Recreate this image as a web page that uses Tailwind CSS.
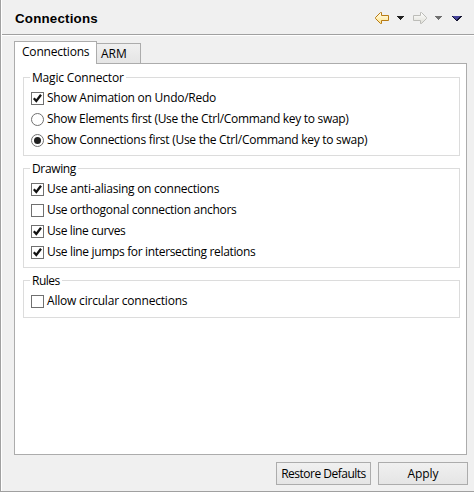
<!DOCTYPE html>
<html lang="en">
<head>
<meta charset="utf-8">
<title>Connections</title>
<script src="https://cdn.jsdelivr.net/npm/@tailwindcss/browser@4"></script>
</head>
<body class="h-[492px] w-[474px] overflow-hidden bg-[#f0f0f0] font-['Open_Sans','Noto_Sans',sans-serif] text-[12px] leading-[16px] text-black">
<main class="flex h-full flex-col border-b border-l border-[#a0a0a0]">
<div class="flex min-h-0 flex-1 flex-col border-l border-white">
  <header class="flex h-[35px] shrink-0 items-center border-b border-[#a0a0a0] pl-[13px]">
    <h1 class="flex-1 pt-[3px] font-['Liberation_Sans',Arial,sans-serif] text-[13.33px] font-bold tracking-[0.2px]">Connections</h1>
    <svg class="h-[34px] w-[104px]" viewBox="370 0 104 34" shape-rendering="crispEdges">
      <defs>
        <linearGradient id="gold" x1="0" y1="0" x2="0" y2="1"><stop offset="0" stop-color="#fffdf0"/><stop offset="1" stop-color="#ffe389"/></linearGradient>
        <linearGradient id="grey" x1="0" y1="0" x2="0" y2="1"><stop offset="0" stop-color="#fff"/><stop offset="1" stop-color="#deded6"/></linearGradient>
      </defs>
      <path d="M375.5 17.5L380.5 12.5H381.5V15.5H388.5V20.5H381.5V23.5H380.5L375.5 18.5Z" fill="url(#gold)" stroke="#b87b13" shape-rendering="auto"/>
      <path d="M397 16h7v1h-1v1h-1v1h-1v1h-1v-1h-1v-1h-1v-1h-1z" fill="#202020"/>
      <path d="M426.500 17.5L421.5 12.5H420.5V15.5H413.500V20.5H420.5V23.5H421.5L426.500 18.5Z" fill="url(#grey)" stroke="#bcbcb8" shape-rendering="auto"/>
      <path d="M435 16h7v1h-1v1h-1v1h-1v1h-1v-1h-1v-1h-1v-1h-1z" fill="#707070"/>
      <path d="M452 16h10v1h-1v1h-1v1h-1v1h-1v1h-2v-1h-1v-1h-1v-1h-1v-1h-1z" fill="#12122e"/>
      <path d="M453 16h7v1h-1v1h-1v1h-1v1h-1v-1h-1v-1h-1v-1h-1z" fill="#45439a"/>
    </svg>
  </header>
  <div class="h-px shrink-0 bg-white"></div>

  <div class="flex shrink-0 items-end pt-[5px] pl-[12px]">
    <div class="relative z-10 -mb-px h-[23px] w-[83px] border border-b-0 border-[#acacac] bg-white pt-[2px] pl-[7px] tracking-[-0.2px] whitespace-nowrap">Connections</div>
    <div class="h-[20px] w-[44px] border border-b-0 border-l-0 border-[#acacac] bg-linear-to-b from-[#f0f0f0] to-[#e5e5e5] pt-[2px] pl-[4px]">ARM</div>
  </div>
  <section class="ml-[12px] flex h-[392px] w-[453px] shrink-0 flex-col border border-[#acacac] bg-white pt-[6px] pl-[8px]">
    <div class="relative h-[86px] w-[437px] shrink-0">
      <div class="mt-[7px] h-[79px] border border-[#dcdcdc] pt-[12px] pl-[7px]">
        <div class="flex h-[16px] items-center gap-[3px]"><svg class="size-[13px]" viewBox="0 0 13 13"><rect x=".5" y=".5" width="12" height="12" fill="#fff" stroke="#707070"/><path d="M2.800 6.300L5.300 9L10 2.800" fill="none" stroke="#111" stroke-width="2.300"/></svg><span class="tracking-[-0.25px] whitespace-nowrap">Show Animation on Undo/Redo</span></div>
        <div class="mt-[5px] flex h-[16px] items-center gap-[3px]"><svg class="size-[13px]" viewBox="0 0 13 13"><circle cx="6.500" cy="6.500" r="6" fill="#fff" stroke="#707070"/></svg><span class="tracking-[-0.3px] whitespace-nowrap">Show Elements first (Use the Ctrl/Command key to swap)</span></div>
        <div class="mt-[5px] flex h-[16px] items-center gap-[3px]"><svg class="size-[13px]" viewBox="0 0 13 13"><circle cx="6.500" cy="6.500" r="6" fill="#fff" stroke="#707070"/><circle cx="6.500" cy="6.500" r="3.500" fill="#202020"/></svg><span class="tracking-[-0.27px] whitespace-nowrap">Show Connections first (Use the Ctrl/Command key to swap)</span></div>
      </div>
      <div class="absolute top-0 left-[7px] w-[96px] bg-white pl-[2px] tracking-[-0.17px] whitespace-nowrap">Magic Connector</div>
    </div>

    <div class="relative mt-[5px] h-[107px] w-[437px] shrink-0">
      <div class="mt-[7px] h-[100px] border border-[#dcdcdc] pt-[12px] pl-[7px]">
        <div class="flex h-[16px] items-center gap-[3px]"><svg class="size-[13px]" viewBox="0 0 13 13"><rect x=".5" y=".5" width="12" height="12" fill="#fff" stroke="#707070"/><path d="M2.800 6.300L5.300 9L10 2.800" fill="none" stroke="#111" stroke-width="2.300"/></svg><span class="tracking-[-0.25px] whitespace-nowrap">Use anti-aliasing on connections</span></div>
        <div class="mt-[5px] flex h-[16px] items-center gap-[3px]"><svg class="size-[13px]" viewBox="0 0 13 13"><rect x=".5" y=".5" width="12" height="12" fill="#fff" stroke="#707070"/></svg><span class="tracking-[-0.3px] whitespace-nowrap">Use orthogonal connection anchors</span></div>
        <div class="mt-[5px] flex h-[16px] items-center gap-[3px]"><svg class="size-[13px]" viewBox="0 0 13 13"><rect x=".5" y=".5" width="12" height="12" fill="#fff" stroke="#707070"/><path d="M2.800 6.300L5.300 9L10 2.800" fill="none" stroke="#111" stroke-width="2.300"/></svg><span class="tracking-[-0.38px] whitespace-nowrap">Use line curves</span></div>
        <div class="mt-[5px] flex h-[16px] items-center gap-[3px]"><svg class="size-[13px]" viewBox="0 0 13 13"><rect x=".5" y=".5" width="12" height="12" fill="#fff" stroke="#707070"/><path d="M2.800 6.300L5.300 9L10 2.800" fill="none" stroke="#111" stroke-width="2.300"/></svg><span class="tracking-[-0.34px] whitespace-nowrap">Use line jumps for intersecting relations</span></div>
      </div>
      <div class="absolute top-0 left-[7px] w-[48px] bg-white pl-[2px] tracking-[-0.35px] whitespace-nowrap">Drawing</div>
    </div>

    <div class="relative mt-[5px] h-[45px] w-[437px] shrink-0">
      <div class="mt-[7px] h-[38px] border border-[#dcdcdc] pt-[12px] pl-[7px]">
        <div class="flex h-[16px] items-center gap-[3px]"><svg class="size-[13px]" viewBox="0 0 13 13"><rect x=".5" y=".5" width="12" height="12" fill="#fff" stroke="#707070"/></svg><span class="tracking-[-0.2px] whitespace-nowrap">Allow circular connections</span></div>
      </div>
      <div class="absolute top-0 left-[7px] w-[32px] bg-white pl-[2px] tracking-[-0.5px] whitespace-nowrap">Rules</div>
    </div>
  </section>

  <footer class="mt-[7px] flex shrink-0 justify-end gap-[7px] pr-[6px]">
    <button class="h-[23px] w-[95px] border border-[#acacac] bg-linear-to-b from-[#f0f0f0] to-[#e5e5e5] tracking-[-0.5px] whitespace-nowrap">Restore Defaults</button>
    <button class="h-[23px] w-[90px] border border-[#acacac] bg-linear-to-b from-[#f0f0f0] to-[#e5e5e5] tracking-[-0.1px]">Apply</button>
  </footer>
</div>
</main>
</body>
</html>
